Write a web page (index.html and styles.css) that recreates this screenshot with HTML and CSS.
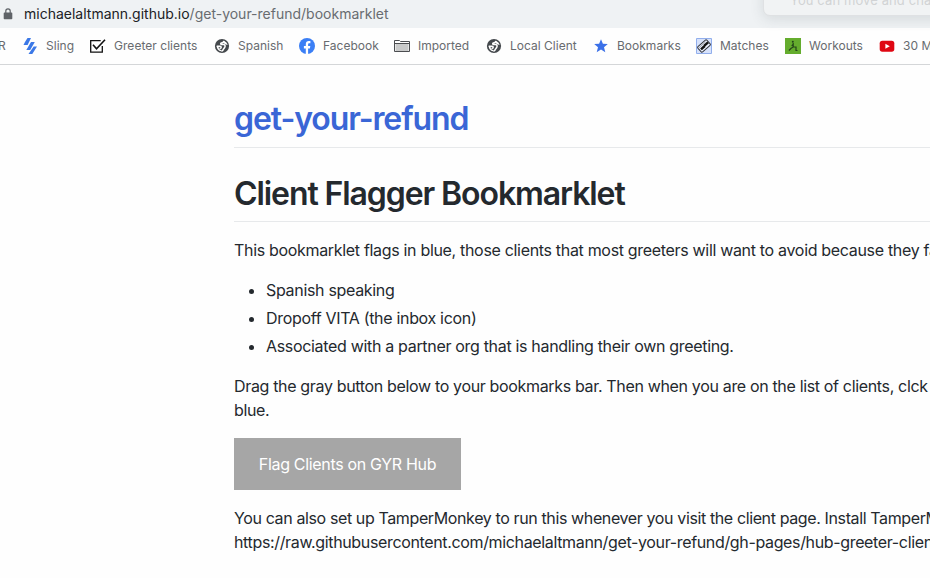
FILE: index.html
```
<!DOCTYPE html>
<html lang="en">
<head>
<meta charset="utf-8">
<title>get-your-refund</title>
<link rel="stylesheet" href="styles.css">
</head>
<body>
<svg class="symbols" aria-hidden="true">
  <symbol id="globe" viewBox="0 0 16 16"><circle cx="8" cy="8" r="7.100" fill="#45494d"/><path d="M10 2.900c-.2 1.400-1 1.900-2.700 2-.9.100-.8 1.600.1 1.700h2.300c1.500.2 1.600 1.400 1.200 2.500-.6 1.700-1.700 1.400-1.900 3l-1.600 1.300M2.700 8.300h3.500c1.300.1 1.300 1.700.1 1.900l-.8.400" fill="none" stroke="#fff" stroke-width="1.500"/><path d="M10 2.900c1.900.7 3.200 2.100 3.600 4.200l-2.500-.9-1.800-1.400zM2.700 8l1.800.4.500 2.500 2 1.200v1.200C4.400 12.900 2.700 10.700 2.700 8z" fill="#fff"/></symbol>
</svg>
<header class="browser">
  <div class="address">
    <svg class="lock" viewBox="0 0 10 12"><path d="M1.500 4.500h7a.8.8 0 0 1 .8.800v5.200a.8.8 0 0 1-.8.800h-7a.8.8 0 0 1-.8-.8V5.300a.8.8 0 0 1 .8-.8z" fill="#5f6368"/><path d="M2.800 5.200V3.100a2.200 2.200 0 0 1 4.400 0v2.100" fill="none" stroke="#5f6368" stroke-width="1.200"/></svg>
    <div class="url"><span class="host">michaelaltmann.github.io</span><span class="path">/get-your-refund/bookmarklet</span></div>
  </div>
  <nav class="bookmarks">
    <a class="bookmark clipped">R</a>
    <a class="bookmark"><svg viewBox="0 0 16 16"><path d="M5.500 0H9L5.600 7H1.500L3 4zM9 4h3.800l-4.600 8H4.300zM11.700 8.500H15L10.300 16H6.500z" fill="#3b78e7"/></svg><span>Sling</span></a>
    <a class="bookmark greeter"><svg class="check" viewBox="0 0 17 16"><path d="M13.300 8v6.200H1.700V2.600h10" fill="none" stroke="#111" stroke-width="1.300"/><path d="m4 6.700 3.500 4L16 1.800" fill="none" stroke="#111" stroke-width="1.600"/></svg><span>Greeter clients</span></a>
    <a class="bookmark"><svg viewBox="0 0 16 16"><use href="#globe"/></svg><span>Spanish</span></a>
    <a class="bookmark"><svg viewBox="0 0 16 16"><circle cx="8" cy="8" r="8" fill="#3b7ff5"/><path d="M6.800 15.900v-5.500H4.900V8h1.900V6.300c0-2.100 1.200-3.200 3-3.200.9 0 1.600.1 1.600.1v2h-1c-1 0-1.300.6-1.300 1.200V8h2.200l-.4 2.400H9.100v5.500z" fill="#fff"/></svg><span>Facebook</span></a>
    <a class="bookmark"><svg viewBox="0 0 16 16"><path d="M.5 13.500v-11h5L6.500 3.500h9v10z" fill="#fff" stroke="#4b4d50"/><path d="M1.500 6h13v7h-13z" fill="#c9caca"/><path d="M1 5.500h14" stroke="#4b4d50"/></svg><span>Imported</span></a>
    <a class="bookmark"><svg viewBox="0 0 16 16"><use href="#globe"/></svg><span>Local Client</span></a>
    <a class="bookmark"><svg viewBox="0 0 16 16"><path d="m8 1.300 1.900 4.500 4.900.3-3.800 3.200 1.300 5L8 11.600l-4.300 2.700 1.300-5-3.800-3.200 4.900-.3z" fill="#3b70e8"/></svg><span>Bookmarks</span></a>
    <a class="bookmark"><svg viewBox="0 0 16 16"><path d="M.5.500h15v15H.5z" fill="#d7e2fb" stroke="#91aeec"/><g transform="rotate(-42 8 8)"><rect x="2" y="4.500" width="12" height="7" rx="1" fill="#edf2ff" stroke="#34373e" stroke-width="1"/><path d="M3.500 8.500h5M8.500 8h5" stroke="#111" stroke-width="2.500"/><path d="M2 6h10" stroke="#777b85" stroke-width=".6"/></g></svg><span>Matches</span></a>
    <a class="bookmark"><svg viewBox="0 0 16 16"><path d="M0 0h16v16H0z" fill="#64ac2d"/><circle cx="7.800" cy="3.700" r="1" fill="#24451a"/><path d="M8.200 5v4l-2.300 1.500-2 2M8 9h3v3.500h1.500M8.200 6l-1.500 2" fill="none" stroke="#24451a" stroke-width="1.200"/></svg><span>Workouts</span></a>
    <a class="bookmark"><svg viewBox="0 0 16 16"><rect x=".7" y="2.700" width="14.600" height="11" rx="2.600" fill="#df0712"/><path d="m6.400 5.700 4.400 2.500-4.400 2.500z" fill="#fff"/></svg><span>30 Minute</span></a>
  </nav>
  <div class="popup">You can move and change</div>
</header>
<main class="page">
  <h1 class="site"><a>get-your-refund</a></h1>
  <h1 class="title">Client Flagger Bookmarklet</h1>
  <p class="intro">This bookmarklet flags in blue, those clients that most greeters will want to avoid because they fall</p>
  <ul>
    <li>Spanish speaking</li>
    <li>Dropoff VITA (the inbox icon)</li>
    <li>Associated with a partner org that is handling their own greeting.</li>
  </ul>
  <p class="drag">Drag the gray button below to your bookmarks bar. Then when you are on the list of clients, clck<br>blue.</p>
  <a class="button">Flag Clients on GYR Hub</a>
  <p class="tamper">You can also set up TamperMonkey to run this whenever you visit the client page. Install TamperMonkey<br><span class="link">https://raw.githubusercontent.com/michaelaltmann/get-your-refund/gh-pages/hub-greeter-clients</span></p>
</main>
</body>
</html>
```
FILE: styles.css
```
* { box-sizing: border-box; }
body {
  margin: 0;
  height: 578px;
  overflow: hidden;
  background: #fefefe;
  color: #24292e;
  font: 16px/24px Inter, "Liberation Sans", sans-serif;
  letter-spacing: -0.32px;
}
.symbols { display: none; }
.browser { position: relative; height: 65px; border-bottom: 1px solid #d4d6d8; overflow: hidden; }
.address { display: flex; align-items: center; height: 28px; padding-left: 3px; background: #eff2f4; }
.lock { width: 10px; height: 12px; }
.url { margin-left: 11px; font-size: 14px; letter-spacing: 0; white-space: nowrap; }
.host { color: #202124; }
.path { color: #686c70; }
.bookmarks {
  display: grid;
  grid-template-columns: 22px 67px 125px 85px 95px 92px 107px 103px 89px 94px 120px;
  align-items: center;
  height: 36px;
  color: #686b6f;
  font-size: 12px;
  letter-spacing: 0.01px;
}
.bookmark { display: flex; align-items: center; gap: 8px; white-space: nowrap; }
.bookmark svg { flex: none; width: 16px; height: 16px; }
.bookmark .check { width: 17px; }
.greeter { letter-spacing: 0.04px; }
.clipped { margin-left: -2px; }
.popup {
  position: absolute;
  top: -20px;
  left: 763px;
  width: 220px;
  height: 36px;
  padding: 7px 0 0 26px;
  border: 1px solid #dfe1e3;
  border-radius: 7px;
  background: #f1f3f4;
  box-shadow: 0 3px 14px rgba(60, 70, 80, 0.14);
  color: #d1d3d5;
  font-size: 13px;
  letter-spacing: 0.1px;
  white-space: nowrap;
}
.page { margin-left: 234px; padding-top: 32px; white-space: nowrap; overflow: hidden; }
h1 { margin: 0; border-bottom: 1px solid #e7e9eb; font-size: 32px; font-weight: 600; line-height: 40px; letter-spacing: -1.09px; }
.site { height: 51px; color: #3a66d6; }
.site a { display: block; padding-top: 2px; }
.title { height: 50px; margin-top: 24px; padding-top: 2px; }
p { margin: 0 0 16px; }
.intro { margin-top: 16px; }
ul { margin: 0 0 16px; padding-left: 32px; }
li + li { margin-top: 4px; }
.drag { letter-spacing: -0.34px; }
.button { display: block; width: 227px; height: 52px; margin-bottom: 16px; background: #a6a6a6; color: #fff; line-height: 52px; text-align: center; }
.tamper { letter-spacing: -0.38px; }
.link { letter-spacing: -0.35px; }
```
